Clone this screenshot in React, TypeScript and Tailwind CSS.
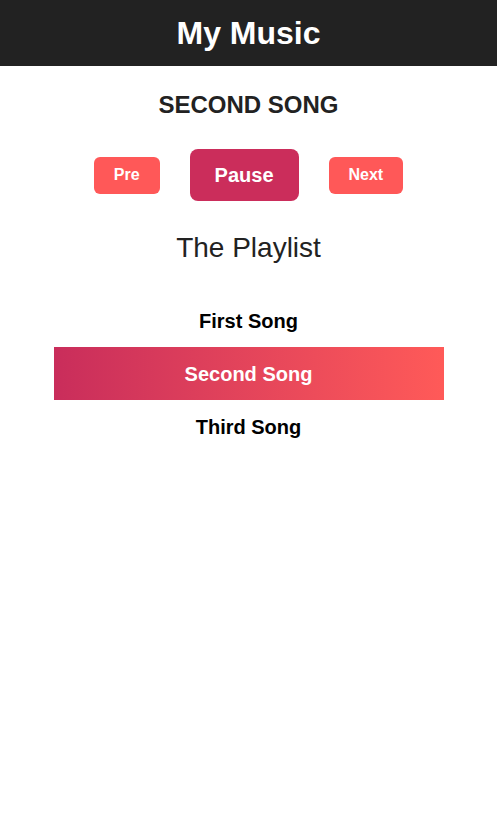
const songs = ['First Song', 'Second Song', 'Third Song'];

export default function App() {
  const current = 1;

  return (
    <div className="min-h-screen bg-white font-['Liberation_Sans',Arial,sans-serif] text-center">
      {/* Header */}
      <header className="h-[66px] bg-[#222222] flex items-center justify-center">
        <h1 className="text-[32px] leading-none font-bold text-white">My Music</h1>
      </header>

      {/* Now playing */}
      <h2 className="mt-[25px] text-[24px] leading-[28px] font-bold uppercase text-[#222222]">
        {songs[current]}
      </h2>

      {/* Controls */}
      <div className="mt-[30px] h-[52px] flex items-center justify-center gap-[30px]">
        <button className="h-[37px] px-5 rounded-md bg-[#ff5858] text-white text-base font-bold">
          Pre
        </button>
        <button className="h-[52px] px-[25px] rounded-lg bg-[#cb2d5b] text-white text-[20px] font-bold">
          Pause
        </button>
        <button className="h-[37px] px-5 rounded-md bg-[#ff5858] text-white text-base font-bold">
          Next
        </button>
      </div>

      {/* Playlist */}
      <h3 className="mt-[31px] text-[28px] leading-[32px] text-[#222222]">The Playlist</h3>

      <ul className="mt-[30px] w-[390px] mx-auto">
        {songs.map((song, idx) => (
          <li
            key={song}
            className={
              idx === current
                ? 'h-[53px] flex items-center justify-center text-[20px] font-bold text-white bg-gradient-to-r from-[#c92d5b] to-[#ff5a58]'
                : 'h-[53px] flex items-center justify-center text-[20px] font-bold text-black'
            }
          >
            {song}
          </li>
        ))}
      </ul>
    </div>
  );
}
